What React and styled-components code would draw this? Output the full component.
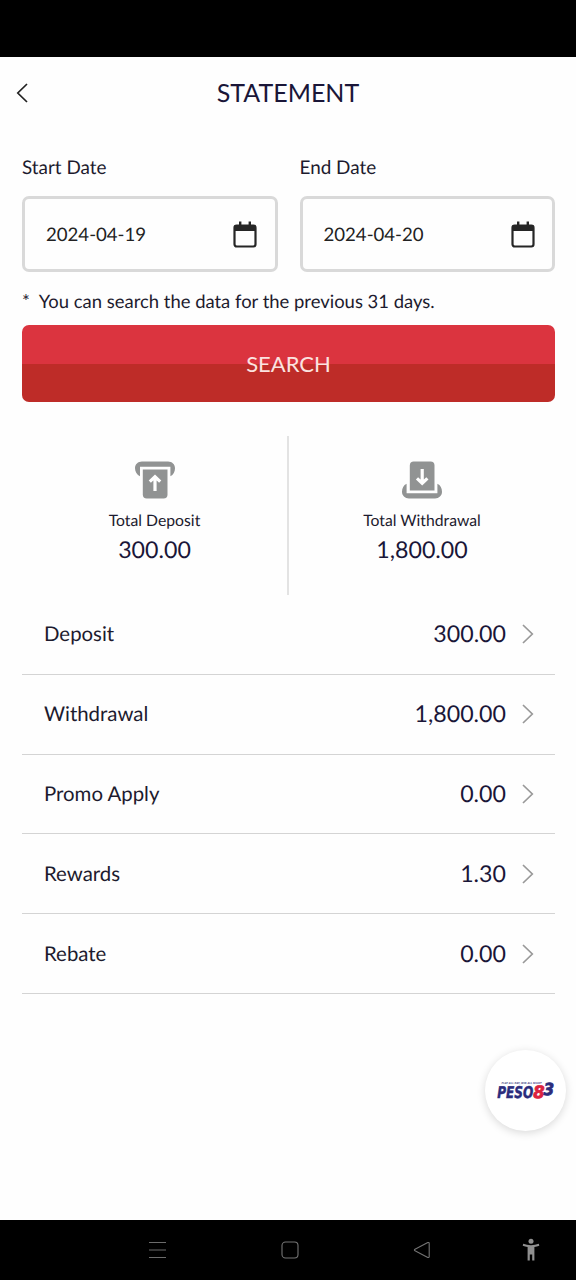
import React from "react";
import styled, { createGlobalStyle } from "styled-components";

const GlobalStyle = createGlobalStyle`
  * {
    box-sizing: border-box;
  }
  body {
    margin: 0;
    background: #fff;
    font-family: Lato, "Liberation Sans", sans-serif;
    color: #1d1b2e;
    text-rendering: geometricPrecision;
  }
`;

const Screen = styled.div`
  display: flex;
  flex-direction: column;
  width: 576px;
  height: 1280px;
  overflow: hidden;
  background: #fefefe;
`;

const StatusBar = styled.div`
  flex: none;
  height: 57px;
  background: #000;
`;

const Header = styled.header`
  flex: none;
  display: grid;
  grid-template-columns: 44px 1fr 44px;
  align-items: center;
  height: 71px;
`;

const BackButton = styled.button`
  display: flex;
  padding: 0 0 0 16px;
  border: 0;
  background: none;
`;

const Title = styled.h1`
  margin: 0;
  font-size: 25px;
  font-weight: 400;
  line-height: 30px;
  text-align: center;
  color: #1a1638;
`;

const Content = styled.main`
  flex: 1;
  display: flex;
  flex-direction: column;
  padding: 28px 21px 0 22px;
`;

const DateFields = styled.div`
  display: grid;
  grid-template-columns: 1fr 1fr;
  gap: 22px;
`;

const FieldLabel = styled.div`
  height: 24px;
  margin-bottom: 16px;
  font-size: 18.9px;
  line-height: 24px;
`;

const DateInput = styled.div`
  display: flex;
  align-items: center;
  justify-content: space-between;
  height: 76px;
  padding: 0 17.5px 0 21px;
  border: 3px solid #d9d9d9;
  border-radius: 7px;
  font-size: 18.6px;
  color: #222;
`;

const Note = styled.p`
  display: flex;
  gap: 9px;
  height: 24px;
  margin: 17px 0 12px;
  font-size: 18.45px;
  line-height: 24px;
`;

const SearchButton = styled.button`
  height: 77px;
  padding: 0;
  border: 0;
  border-radius: 7px;
  background: linear-gradient(#db343f 0, #db343f 39px, #be2c28 39px);
  font-family: inherit;
  font-size: 22px;
  color: #fbe3e0;
`;

const Totals = styled.section`
  display: grid;
  grid-template-columns: 265px 1fr;
  height: 159px;
  margin-top: 34px;
`;

const Total = styled.div`
  display: flex;
  flex-direction: column;
  align-items: center;
  padding-top: 25px;

  & + & {
    border-left: 2px solid #e3e3e3;
  }
`;

const TotalLabel = styled.div`
  margin-top: 12px;
  font-size: 15.75px;
  line-height: 20px;
`;

const TotalValue = styled.div`
  margin-top: 3px;
  font-size: 23.2px;
  line-height: 30px;
  color: #1a1638;
`;

const List = styled.ul`
  margin: 0;
  padding: 0;
  list-style: none;
`;

const Row = styled.li`
  display: flex;
  align-items: center;
  height: 79.8px;
  padding: 0 21px 0 22px;
  border-bottom: 1px solid #d4d4d4;
`;

const RowName = styled.span`
  flex: 1;
  font-size: 20.4px;
`;

const RowValue = styled.span`
  margin-right: 16px;
  padding-bottom: 2px;
  font-size: 23.2px;
  color: #1a1638;
`;

// floats over the page, above the navigation bar
const Bubble = styled.div`
  position: absolute;
  left: 485px;
  top: 1050px;
  display: flex;
  align-items: center;
  justify-content: center;
  width: 81px;
  height: 81px;
  border-radius: 50%;
  background: #fff;
  box-shadow: 0 2px 8px rgba(0, 0, 0, 0.15);
`;

const NavBar = styled.nav`
  flex: none;
  display: flex;
  align-items: center;
  height: 60px;
  padding: 0 36px 0 148px;
  background: #000;
`;

const NavItem = styled.div`
  display: flex;
  margin-right: ${(props) => props.$after || 0}px;
`;

const BackIcon = () => (
  <svg width="12" height="20" viewBox="0 0 12 20" fill="none" stroke="#222" strokeWidth="1.7">
    <path d="M11 1 L1.8 10 L11 19" />
  </svg>
);

const ChevronIcon = () => (
  <svg width="12" height="20" viewBox="0 0 12 20" fill="none" stroke="#999" strokeWidth="1.7">
    <path d="M1 1 L10.3 10 L1 19" />
  </svg>
);

const CalendarIcon = () => (
  <svg width="24" height="27" viewBox="0 0 24 27" fill="none">
    <rect x="1.5" y="4.5" width="21" height="21" rx="2.2" stroke="#262626" strokeWidth="2.2" />
    <path d="M1.5 4.5h21v5.6h-21z M6 0.5h2.4v4h-2.4z M15.6 0.5h2.4v4h-2.4z" fill="#262626" />
  </svg>
);

const DepositIcon = () => (
  <svg width="40" height="38" viewBox="0 0 40 38" fill="#919393">
    <path d="M7 0.5h26c4 0 7 2.8 7 6.7 0 3.5-1.6 6.7-4.6 8.1V5.7H5v9.6C2 13.9 0 10.7 0 7.2 0 3.3 3 .5 7 .5z" />
    <path d="M7.8 8.5h24.7v25a4 4 0 0 1-4 4H11.8a4 4 0 0 1-4-4z" />
    <path d="M20 30V16.8M14.8 20.6L20 15.8l5.2 4.8" fill="none" stroke="#fff" strokeWidth="3.2" />
  </svg>
);

const WithdrawalIcon = () => (
  <svg width="40" height="38" viewBox="0 0 40 38" fill="#919393">
    <path d="M7.8 29.5h24.7v-25a4 4 0 0 0-4-4H11.8a4 4 0 0 0-4 4z" />
    <path d="M7 37.5h26c4 0 7-2.8 7-6.7 0-3.5-1.6-6.7-4.6-8.1v9.5H4.6v-9.5C1.6 24.1 0 27.3 0 30.8c0 3.9 3 6.7 7 6.7z" />
    <path d="M20.2 8v13.6M15 17.4l5.2 4.8 5.2-4.8" fill="none" stroke="#fff" strokeWidth="3.2" />
  </svg>
);

const Logo = () => (
  <svg width="60" height="22" viewBox="0 0 60 22" fontFamily="DejaVu Sans" fontWeight="700" fontStyle="italic">
    <text x="5.5" y="4.2" fontSize="2.7" fill="#55578f" textLength="40" lengthAdjust="spacingAndGlyphs">
      PLAY ALL DAY, WIN ALL NIGHT
    </text>
    <text x="1.2" y="18.2" fontSize="16.2" fill="#2b2c7c" stroke="#2b2c7c" strokeWidth="0.5" textLength="36" lengthAdjust="spacingAndGlyphs">
      PESO
    </text>
    <text x="37.2" y="18.4" fontSize="17" fill="#dc2340" stroke="#dc2340" strokeWidth="0.8" textLength="11.4" lengthAdjust="spacingAndGlyphs">
      8
    </text>
    <text x="47.6" y="15.4" fontSize="16.5" fill="#2b2c7c" stroke="#2b2c7c" strokeWidth="0.8" textLength="10.6" lengthAdjust="spacingAndGlyphs">
      3
    </text>
  </svg>
);

const MenuIcon = () => (
  <svg width="19" height="18" viewBox="0 0 19 18" stroke="#6b6b6b" strokeWidth="1.1">
    <path d="M1 1.5h17M1 9h17M1 16.5h17" />
  </svg>
);

const HomeIcon = () => (
  <svg width="18" height="18" viewBox="0 0 18 18" fill="none" stroke="#747474" strokeWidth="1.1">
    <rect x="1" y="1" width="16" height="16" rx="3.5" />
  </svg>
);

const NavBackIcon = () => (
  <svg width="18" height="18" viewBox="0 0 18 18" fill="none" stroke="#747474" strokeWidth="1.1">
    <path d="M14.8 1.6L2 8.2c-.8.4-.8 1.2 0 1.6l12.8 6.6c.7.3 1.4 0 1.4-.8V2.4c0-.8-.7-1.1-1.4-.8z" />
  </svg>
);

const AccessibilityIcon = () => (
  <svg width="18" height="24" viewBox="0 0 18 24" fill="#8f8f8f">
    <circle cx="9" cy="3.2" r="2.5" />
    <path d="M1.2 5.8C6 7.6 12 7.6 16.8 5.8l.5 2c-1.6.6-3.3 1-4.9 1.2v13.6h-2.2v-6.1H7.8v6.1H5.6V9C4 8.8 2.3 8.4.7 7.8z" />
  </svg>
);

const totals = [
  { label: "Total Deposit", value: "300.00", icon: <DepositIcon /> },
  { label: "Total Withdrawal", value: "1,800.00", icon: <WithdrawalIcon /> },
];

const rows = [
  { name: "Deposit", value: "300.00" },
  { name: "Withdrawal", value: "1,800.00" },
  { name: "Promo Apply", value: "0.00" },
  { name: "Rewards", value: "1.30" },
  { name: "Rebate", value: "0.00" },
];

const DateField = ({ label, value }) => (
  <div>
    <FieldLabel>{label}</FieldLabel>
    <DateInput>
      {value}
      <CalendarIcon />
    </DateInput>
  </div>
);

export default function App() {
  return (
    <Screen>
      <GlobalStyle />
      <StatusBar />
      <Header>
        <BackButton aria-label="Back">
          <BackIcon />
        </BackButton>
        <Title>STATEMENT</Title>
      </Header>
      <Content>
        <DateFields>
          <DateField label="Start Date" value="2024-04-19" />
          <DateField label="End Date" value="2024-04-20" />
        </DateFields>
        <Note>
          <span>*</span>
          <span>You can search the data for the previous 31 days.</span>
        </Note>
        <SearchButton>SEARCH</SearchButton>
        <Totals>
          {totals.map((t) => (
            <Total key={t.label}>
              {t.icon}
              <TotalLabel>{t.label}</TotalLabel>
              <TotalValue>{t.value}</TotalValue>
            </Total>
          ))}
        </Totals>
        <List>
          {rows.map((row) => (
            <Row key={row.name}>
              <RowName>{row.name}</RowName>
              <RowValue>{row.value}</RowValue>
              <ChevronIcon />
            </Row>
          ))}
        </List>
      </Content>
      <Bubble>
        <Logo />
      </Bubble>
      <NavBar>
        <NavItem $after={114}>
          <MenuIcon />
        </NavItem>
        <NavItem $after={114}>
          <HomeIcon />
        </NavItem>
        <NavItem $after={91}>
          <NavBackIcon />
        </NavItem>
        <NavItem>
          <AccessibilityIcon />
        </NavItem>
      </NavBar>
    </Screen>
  );
}
